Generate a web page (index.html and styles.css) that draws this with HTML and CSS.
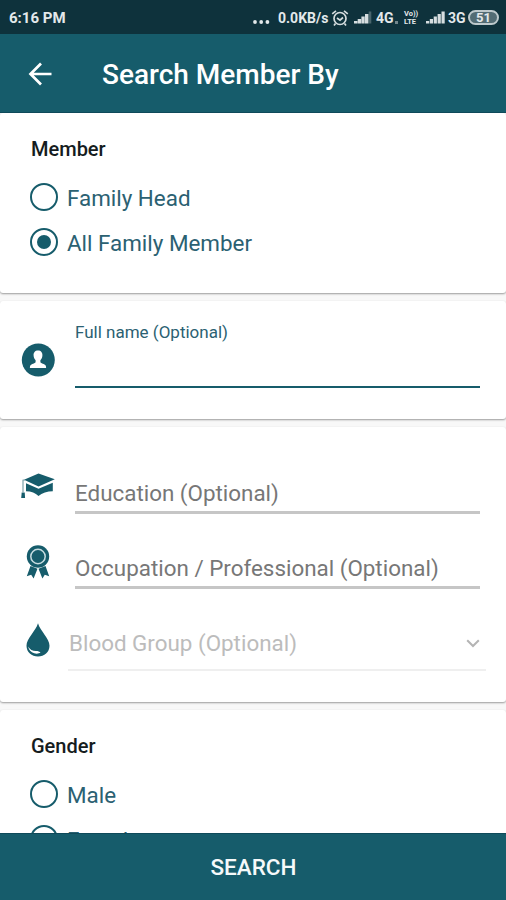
FILE: index.html
```html
<!DOCTYPE html>
<html lang="en">
<head>
<meta charset="utf-8">
<title>Search Member By</title>
<link rel="stylesheet" href="styles.css">
</head>
<body>
<div class="screen">
  <div class="status">
    <span class="time">6:16 PM</span>
    <svg class="dots" width="17" height="4" viewBox="0 0 17 4" fill="#e3e9eb"><circle cx="2" cy="2" r="1.9"/><circle cx="8.200" cy="2" r="1.9"/><circle cx="14.400" cy="2" r="1.9"/></svg>
    <span class="speed">0.0KB/s</span>
    <svg class="alarm" width="18" height="18" viewBox="0 0 18 18" fill="none" stroke="#d5dddf" stroke-width="1.7"><circle cx="9" cy="9.5" r="6"/><path d="M1.2 4.8 5 1.8M16.800 4.800 13 1.800M6 9l3 2.200 3-2.700M4.500 14.500 3 16.500M13.500 14.500l1.500 2"/></svg>
    <svg class="signal" width="18" height="13" viewBox="0 0 18 13" fill="#d5dddf"><path d="M0 10h3.400v2.500H0zM3.700 8h3.400v4.500H3.700zM7.400 5.500h3.300v7H7.400zM11 3h3.400v9.500H11z"/><path d="M14.700.5h2.600v12h-2.600z" opacity=".3"/></svg>
    <span class="net">4G</span>
    <svg class="tick" width="4" height="4" viewBox="0 0 4 4" fill="#71868c"><path d="M0 1h3v3H0z"/></svg>
    <span class="volte"><span>Vo))</span><span>LTE</span></span>
    <svg class="signal two" width="19" height="13" viewBox="0 0 19 13" fill="#d5dddf"><path d="M0 10h3.200v2.500H0zM3.800 8h3.200v4.500H3.800zM7.700 5.500h3.200v7H7.700zM11.600 3h3.200v9.500h-3.200zM15.500.5h3.200v12h-3.200z"/></svg>
    <span class="net">3G</span>
    <span class="battery">51</span>
  </div>
  <header class="appbar">
    <svg class="back" width="24" height="24" viewBox="0 0 24 24" fill="none" stroke="#fff" stroke-width="2.700"><path d="M23.500 12H3M13 1.500 2.500 12 13 22.500"/></svg>
    <h1><span>Search Member By</span></h1>
  </header>
  <main>
    <section class="card member">
      <h2>Member</h2>
      <div class="radio"><i class="ring"></i><span>Family Head</span></div>
      <div class="radio"><i class="ring on"></i><span>All Family Member</span></div>
    </section>
    <section class="card name">
      <svg class="person" width="34" height="34" viewBox="0 0 34 34"><circle cx="17.300" cy="17" r="16.500" fill="#165c6b"/><path fill="#fff" d="M17 7.500c3 0 4.600 2.100 4.400 5-.1 2.100-.9 3.500-2 4.700v2.100c0 .8 3.200 1.500 4.500 2.400 1 .7 1.200 1.700 1.200 3.300H8.900c0-1.600.2-2.600 1.200-3.300 1.300-.9 4.500-1.600 4.500-2.400v-2.100c-1.100-1.200-1.900-2.600-2-4.700-.2-2.900 1.400-5 4.400-5z"/></svg>
      <div class="field active"><span>Full name (Optional)</span></div>
    </section>
    <section class="card details">
      <div class="row">
        <svg class="cap" width="34" height="28" viewBox="0 0 34 28"><path fill="#165c6b" d="M17.500.5 33.800 6.300 17.500 13.500 3 6.800z"/><path fill="#165c6b" d="M5 10.200 17.500 15.700 31.800 9.800v8.500c-5.500.1-10.800 1.700-14.300 4.700-3.200-3-7-4.600-12.500-4.700z"/><path fill="#8fb0b7" d="M1.300 6.800 4 6v1.500L2.700 8v11H1.300z"/><path fill="#165c6b" d="M.7 19.500h3l.4 5.500H.2z"/></svg>
        <div class="field"><span>Education (Optional)</span></div>
      </div>
      <div class="row">
        <svg class="medal" width="24" height="34" viewBox="0 0 24 34"><path fill="#165c6b" d="m4.500 21 7 2.800L7.600 33.500 5.200 29.800.8 31.200zM19.500 21l-7 2.800 3.900 9.700 2.400-3.700 4.400 1.400z"/><circle cx="12" cy="11.500" r="11.200" fill="#165c6b"/><circle cx="12" cy="11.500" r="7.200" fill="none" stroke="#c7dce0" stroke-width="1.500"/></svg>
        <div class="field"><span>Occupation / Professional (Optional)</span></div>
      </div>
      <div class="row">
        <svg class="drop" width="24" height="34" viewBox="0 0 24 34"><path fill="#165c6b" d="M12 .3C14.200 8 23.500 15.500 23.500 22.700 23.500 29.200 18.300 33.500 12 33.500S.5 29.200.5 22.700C.5 15.500 9.800 8 12 .3z"/><path fill="#fff" d="M2.200 23.500c1.600 3.200 4.300 4.600 7.600 4.600 2.200 0 4.200.7 4.700 1.400-1.400 1.200-4 1.500-6.300.8-3.300-1-5.600-3.400-6-6.800z"/></svg>
        <div class="select"><span>Blood Group (Optional)</span><svg width="14" height="9" viewBox="0 0 14 9" fill="none" stroke="#b4b4b4" stroke-width="2"><path d="m1.200 1.200 5.800 5.800 5.800-5.800"/></svg></div>
      </div>
    </section>
    <section class="card gender">
      <h2>Gender</h2>
      <div class="radio"><i class="ring"></i><span>Male</span></div>
      <div class="radio"><i class="ring"></i><span>Female</span></div>
    </section>
  </main>
  <div class="search"><span>SEARCH</span></div>
</div>
</body>
</html>
```
FILE: styles.css
```css
* { box-sizing: border-box; }
body { margin: 0; font-family: Roboto, "Liberation Sans", sans-serif; }
h1, h2 { margin: 0; }
svg { display: block; flex: none; }
span { white-space: nowrap; }
.screen { width: 506px; height: 900px; display: flex; flex-direction: column; overflow: hidden; background: #f8f8f8; }

.status { flex: none; height: 34px; display: flex; align-items: center; padding: 1px 7px 0 9px; background: #0e323c; color: #e3e9eb; font-size: 14px; font-weight: 700; line-height: 18px; }
.time { width: 244px; font-size: 15px; }
.dots { margin-top: 8px; }
.speed { width: 52px; margin-left: 8px; font-size: 14px; }
.alarm { margin-left: 1px; }
.signal { margin-left: 5px; }
.net { width: 18px; margin-left: 4px; }
.tick { margin: 8px 5px 0 1px; }
.volte { width: 15px; font-size: 7.500px; line-height: 8px; }
.volte span { display: block; }
.signal.two { margin-left: 7px; }
.signal.two + .net { margin-left: 3px; }
.battery { width: 31px; height: 15px; margin-left: 2px; border: 2px solid #bdc9cc; border-radius: 8px; background: #526c74; font-size: 13px; line-height: 11px; text-align: center; }

.appbar { flex: none; height: 79px; display: flex; align-items: center; padding: 2px 0 0 28px; background: #165c6b; border-bottom: 1px solid #0f4a5a; color: #fff; }
.appbar h1 { margin: 2px 0 0 50px; font-size: 28px; font-weight: 500; line-height: 34px; }

main { flex: 1; min-height: 0; display: flex; flex-direction: column; gap: 8px; overflow: hidden; }
.card { flex: none; background: #fff; border-radius: 3px; box-shadow: 0 1px 2px rgba(0, 0, 0, .38); }
.member, .gender { height: 180px; padding: 23px 30px 0; }
h2 { height: 26px; margin-bottom: 12.500px; padding-left: 1px; color: #151c20; font-size: 20px; font-weight: 500; line-height: 26px; }
.radio { height: 45px; display: flex; align-items: center; gap: 9px; color: #2b6172; font-size: 22.400px; line-height: 30px; }
.radio span { padding-top: 1px; }
.ring { flex: none; display: flex; align-items: center; justify-content: center; width: 28px; height: 28px; border: 2.500px solid #165c6b; border-radius: 50%; }
.ring.on::after { content: ""; width: 14px; height: 14px; border-radius: 50%; background: #165c6b; }

.name { height: 118px; display: flex; padding: 0 26px 0 21px; }
.person { margin-top: 42px; }
.field { flex: 1; border-bottom: 3px solid #c6c6c6; color: #777; font-size: 22.400px; line-height: 30px; }
.field.active { height: 87px; margin-left: 20px; padding-top: 21px; border-bottom: 2px solid #165c6b; color: #2b6172; font-size: 17px; line-height: 21px; }

.details { height: 275px; padding: 45px 26px 0 21px; }
.row { height: 75px; display: flex; }
.row .field { height: 42px; margin-left: 20px; padding-top: 6px; }
.cap { margin-top: 1px; }
.medal { margin: -2px 5px 0; }
.drop { margin: 1px 5px 0; }
.select { flex: 1; display: flex; justify-content: space-between; height: 49px; margin: 0 -6px 0 13px; padding: 6px 6px 0 1px; border-bottom: 2px solid #efefef; color: #bcbcbc; font-size: 22.400px; line-height: 30px; }
.select svg { margin-top: 11px; }
.search { flex: none; height: 67px; display: flex; align-items: center; justify-content: center; padding: 0 0 0 1px; background: #165c6b; border-top: 1px solid #0f4a5a; color: #f5f9fa; font-size: 22.500px; font-weight: 500; }
```
